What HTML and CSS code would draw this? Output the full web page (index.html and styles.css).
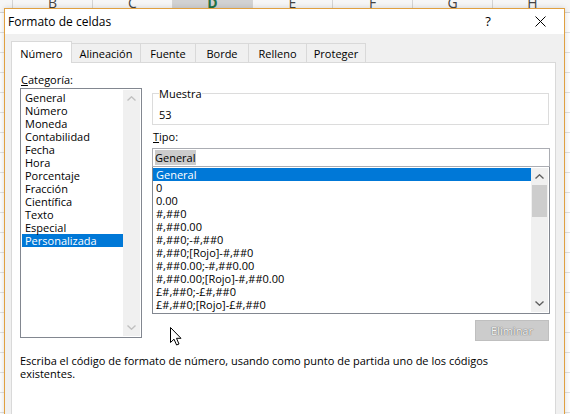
FILE: index.html
```html
<!DOCTYPE html>
<html lang="es">
<head>
  <meta charset="UTF-8">
  <title>Formato de celdas</title>
  <link rel="stylesheet" href="styles.css">
</head>
<body>
  <!-- hoja de calculo detras del dialogo -->
  <div class="sheet">
    <div class="col-heads">
      <div class="col-head corner"></div>
      <div class="col-head">B</div>
      <div class="col-head">C</div>
      <div class="col-head selected">D</div>
      <div class="col-head">E</div>
      <div class="col-head">F</div>
      <div class="col-head">G</div>
      <div class="col-head">H</div>
    </div>
    <div class="cells"></div>
  </div>

  <div class="dialog">
    <div class="titlebar">
      <span class="title">Formato de celdas</span>
      <span class="help">?</span>
      <span class="close">
        <svg width="11" height="11" viewBox="0 0 11 11"><path d="M0.5 0.5 L10.5 10.5 M10.5 0.5 L0.5 10.5" stroke="#000" stroke-width="1" fill="none"/></svg>
      </span>
    </div>

    <div class="tabs">
      <div class="tab active" style="width:61px">Número</div>
      <div class="tab" style="width:69px">Alineación</div>
      <div class="tab" style="width:55px">Fuente</div>
      <div class="tab" style="width:53px">Borde</div>
      <div class="tab" style="width:58px">Relleno</div>
      <div class="tab" style="width:60px">Proteger</div>
    </div>

    <div class="panel">
      <div class="panel-main">
        <div class="left-col">
          <div class="label"><u>C</u>ategoría:</div>
          <div class="listbox cat-list">
            <div class="items">
              <div class="item">General</div>
              <div class="item">Número</div>
              <div class="item">Moneda</div>
              <div class="item">Contabilidad</div>
              <div class="item">Fecha</div>
              <div class="item">Hora</div>
              <div class="item">Porcentaje</div>
              <div class="item">Fracción</div>
              <div class="item">Científica</div>
              <div class="item">Texto</div>
              <div class="item">Especial</div>
              <div class="item selected">Personalizada</div>
            </div>
            <div class="scrollbar disabled">
              <div class="arrow"><svg width="9" height="5" viewBox="0 0 9 5"><path d="M0.5 4.5 L4.5 0.8 L8.5 4.5" stroke="currentColor" stroke-width="1.4" fill="none"/></svg></div>
              <div class="track"></div>
              <div class="arrow"><svg width="9" height="5" viewBox="0 0 9 5"><path d="M0.5 0.5 L4.5 4.2 L8.5 0.5" stroke="currentColor" stroke-width="1.4" fill="none"/></svg></div>
            </div>
          </div>
        </div>

        <div class="right-col">
          <fieldset class="sample">
            <legend>Muestra</legend>
            <div class="sample-value">53</div>
          </fieldset>

          <div class="label tipo"><u>T</u>ipo:</div>
          <div class="type-input"><span class="sel-text">General</span></div>
          <div class="listbox type-list">
            <div class="items">
              <div class="item selected">General</div>
              <div class="item">0</div>
              <div class="item">0.00</div>
              <div class="item">#,##0</div>
              <div class="item">#,##0.00</div>
              <div class="item">#,##0;-#,##0</div>
              <div class="item">#,##0;[Rojo]-#,##0</div>
              <div class="item">#,##0.00;-#,##0.00</div>
              <div class="item">#,##0.00;[Rojo]-#,##0.00</div>
              <div class="item">£#,##0;-£#,##0</div>
              <div class="item">£#,##0;[Rojo]-£#,##0</div>
            </div>
            <div class="scrollbar">
              <div class="arrow"><svg width="9" height="5" viewBox="0 0 9 5"><path d="M0.5 4.5 L4.5 0.8 L8.5 4.5" stroke="currentColor" stroke-width="1.4" fill="none"/></svg></div>
              <div class="track"><div class="thumb"></div></div>
              <div class="arrow"><svg width="9" height="5" viewBox="0 0 9 5"><path d="M0.5 0.5 L4.5 4.2 L8.5 0.5" stroke="currentColor" stroke-width="1.4" fill="none"/></svg></div>
            </div>
          </div>
          <div class="btn-row">
            <button class="btn" disabled>Eliminar</button>
          </div>
        </div>
      </div>

      <p class="description">
        Escriba el código de formato de número, usando como punto de partida uno de los códigos<br>
        existentes.
      </p>
    </div>
  </div>

  <!-- puntero del raton -->
  <svg class="cursor" width="13" height="20" viewBox="0 0 13 20">
    <path d="M0.5 0.5 L0.5 15.5 L4 12.2 L6.6 18 L9 17 L6.5 11.3 L11 11.3 Z" fill="#fff" stroke="#000" stroke-width="1" stroke-linejoin="miter"/>
  </svg>
</body>
</html>
```

FILE: styles.css
```css
* {
  box-sizing: border-box;
}

html, body {
  margin: 0;
  padding: 0;
  width: 570px;
  height: 414px;
  overflow: hidden;
}

body {
  background: #fff;
  font-family: "Open Sans", "Noto Sans", sans-serif;
  font-size: 11px;
  line-height: 13px;
  color: #000;
  position: relative;
}

/* hoja */
.sheet {
  height: 100%;
}

.col-heads {
  display: flex;
  margin-top: -7px;
  height: 20px;
  background: #f6f6f6;
  border-bottom: 1px solid #d4d4d4;
}

.col-head {
  width: 80px;
  flex-shrink: 0;
  border-right: 1px solid #d4d4d4;
  text-align: center;
  line-height: 20px;
  font-size: 14px;
  color: #444;
}

.col-head.corner {
  width: 13px;
}

.col-head.selected {
  background: #d2d2d2;
  color: #217346;
  font-weight: bold;
}

.cells {
  height: 420px;
  background:
    repeating-linear-gradient(to bottom, transparent 0, transparent 19px, #e1e1e1 19px, #e1e1e1 20px),
    repeating-linear-gradient(to right, transparent 0, transparent 12px, #e1e1e1 12px, #e1e1e1 13px, transparent 13px, transparent 92px, #e1e1e1 92px, #e1e1e1 93px);
}

/* dialogo */
.dialog {
  position: absolute;
  left: 4px;
  top: 8px;
  width: 561px;
  height: 420px;
  background: #f0f0f0;
  border: 1px solid #e0a040;
  box-shadow: 0 0 6px rgba(0, 0, 0, 0.15);
}

.titlebar {
  height: 25px;
  background: #fff;
  display: flex;
  align-items: center;
  padding-left: 3px;
  font-size: 12px;
}

.title {
  flex: 1;
}

.help {
  width: 14px;
  text-align: center;
  margin-right: 40px;
  font-size: 13px;
}

.close {
  width: 11px;
  height: 11px;
  margin-right: 18px;
  display: flex;
}

.tabs {
  display: flex;
  align-items: flex-end;
  height: 28px;
  margin-left: 6px;
  position: relative;
  z-index: 1;
}

.tab {
  height: 19px;
  border: 1px solid #d9d9d9;
  border-right: none;
  border-bottom: none;
  background: #f0f0f0;
  text-align: center;
  padding-top: 2px;
  line-height: 15px;
}

.tab:last-child {
  border-right: 1px solid #d9d9d9;
}

.tab.active {
  height: 22px;
  background: #fff;
  padding-top: 4px;
  margin-bottom: -1px;
  border-right: 1px solid #d9d9d9;
  margin-right: -1px;
}

.panel {
  margin: 0 8px 0 6px;
  height: 360px;
  background: #fff;
  border: 1px solid #d9d9d9;
  padding: 10px 5px 0 8px;
}

.panel-main {
  display: flex;
  gap: 10px;
}

.label {
  height: 13px;
  padding-left: 1px;
  margin-bottom: 2px;
}

.left-col {
  width: 122px;
}

.listbox {
  display: flex;
  border: 1px solid #828790;
  background: #fff;
}

.cat-list {
  height: 250px;
  padding: 1px;
}

.cat-list .items {
  width: 101px;
  padding-top: 1px;
}

.items .item {
  height: 13px;
  padding-left: 3px;
  white-space: nowrap;
}

.item.selected {
  background: #0078d7;
  color: #fff;
}

.scrollbar {
  width: 17px;
  background: #f0f0f0;
  display: flex;
  flex-direction: column;
  color: #606060;
}

.scrollbar.disabled {
  color: #c0c0c0;
}

.arrow {
  height: 17px;
  display: flex;
  align-items: center;
  justify-content: center;
}

.track {
  flex: 1;
}

.thumb {
  height: 32px;
  margin: 0 1px;
  background: #cdcdcd;
}

.right-col {
  flex: 1;
  margin-top: 14px;
}

.sample {
  margin: 0 1px 0 0;
  padding: 8px 6px 3px;
  border: 1px solid #dcdcdc;
  min-inline-size: 0;
}

.sample legend {
  padding: 0;
  line-height: 13px;
}

.sample-value {
  height: 13px;
}

.label.tipo {
  margin-top: 5px;
  margin-bottom: 5px;
}

.type-input {
  height: 19px;
  border: 1px solid #abadb3;
  padding: 1px 0 0 2px;
}

.sel-text {
  background: #cccccc;
  display: inline-block;
  line-height: 15px;
  padding: 0 1px 0 0;
}

.type-list {
  height: 147px;
  padding: 1px 1px 1px 0;
  border-top: none;
}

.type-list .items {
  flex: 1;
}

.btn-row {
  display: flex;
  justify-content: flex-end;
  margin-top: 6px;
  padding-right: 1px;
}

.btn {
  width: 74px;
  height: 21px;
  background: #cccccc;
  border: 1px solid #bfbfbf;
  font-family: inherit;
  font-size: 11px;
  color: #f6f6f6;
  text-shadow: 0 0 1px #6a6a6a, 0 0 1px #6a6a6a;
  padding: 0;
}

.description {
  margin: 13px 0 0 0;
  line-height: 13px;
}

.cursor {
  position: absolute;
  left: 170px;
  top: 327px;
}
```
